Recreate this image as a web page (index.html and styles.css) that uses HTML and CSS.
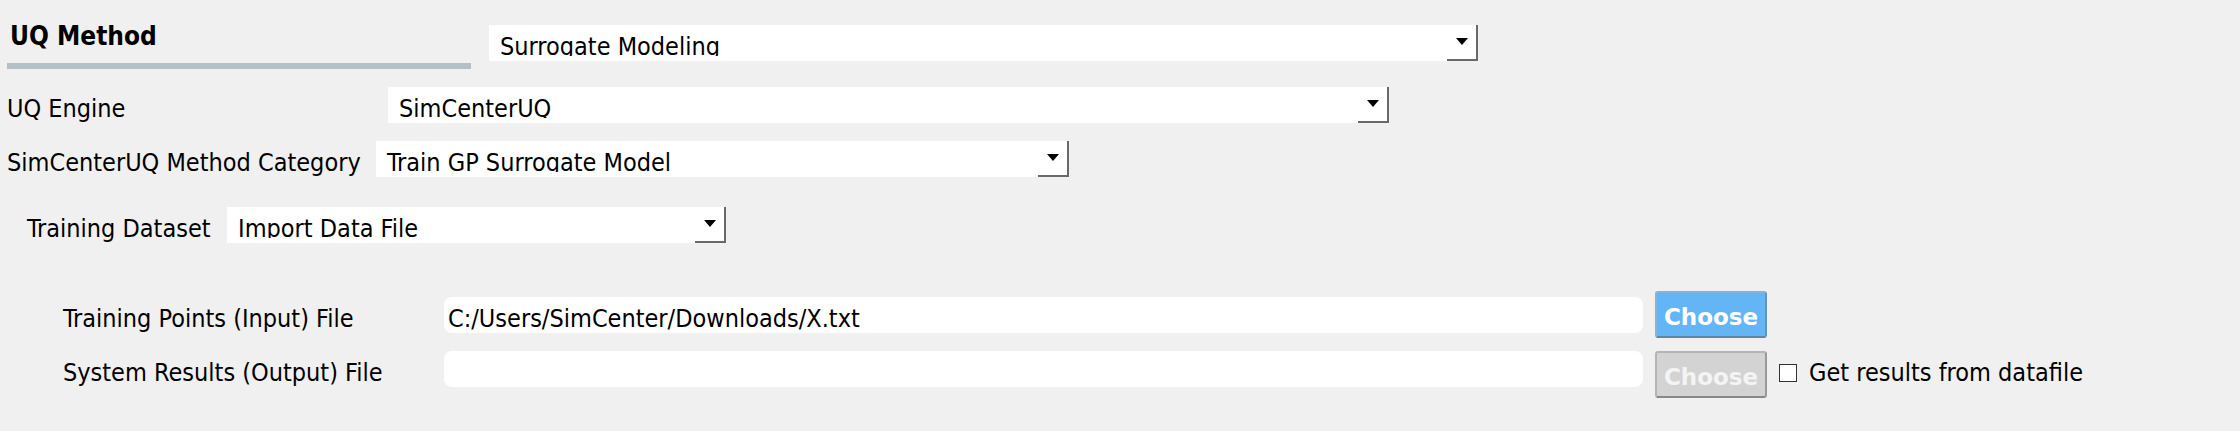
FILE: index.html
```html
<!DOCTYPE html>
<html>
<head>
<meta charset="utf-8">
<link rel="stylesheet" href="styles.css">
</head>
<body>
<div class="page">
  <div class="row row-method">
    <div class="section-title">UQ Method</div>
    <div class="combo combo-method">
      <span class="combo-text">Surrogate Modeling</span>
      <span class="combo-btn"><span class="tri"></span></span>
    </div>
  </div>
  <div class="row row-engine">
    <div class="label label-engine">UQ Engine</div>
    <div class="combo combo-engine">
      <span class="combo-text">SimCenterUQ</span>
      <span class="combo-btn"><span class="tri"></span></span>
    </div>
  </div>
  <div class="row row-category">
    <div class="label label-category">SimCenterUQ Method Category</div>
    <div class="combo combo-category">
      <span class="combo-text">Train GP Surrogate Model</span>
      <span class="combo-btn"><span class="tri"></span></span>
    </div>
  </div>
  <div class="row row-dataset">
    <div class="label label-dataset">Training Dataset</div>
    <div class="combo combo-dataset">
      <span class="combo-text">Import Data File</span>
      <span class="combo-btn"><span class="tri"></span></span>
    </div>
  </div>
  <div class="row row-file row-input">
    <div class="label label-file">Training Points (Input) File</div>
    <div class="field"><span class="field-text">C:/Users/SimCenter/Downloads/X.txt</span></div>
    <button class="btn btn-active">Choose</button>
  </div>
  <div class="row row-file row-output">
    <div class="label label-file">System Results (Output) File</div>
    <div class="field"><span class="field-text"></span></div>
    <button class="btn btn-disabled">Choose</button>
    <label class="check"><span class="box"></span><span class="check-text">Get results from datafile</span></label>
  </div>
</div>
</body>
</html>
```
FILE: styles.css
```css
html, body {
  margin: 0;
  padding: 0;
  background: #f0f0f0;
}
body {
  width: 2240px;
  height: 431px;
  overflow: hidden;
  font-family: "DejaVu Sans Condensed", "DejaVu Sans", sans-serif;
  font-stretch: condensed;
  font-size: 25px;
  color: #000;
}
.page {
  display: flex;
  flex-direction: column;
}
.row {
  display: flex;
  align-items: flex-start;
}
.row-method {
  height: 69px;
}
.section-title {
  margin-left: 7px;
  width: 464px;
  padding-left: 3px;
  box-sizing: border-box;
  height: 69px;
  padding-top: 20px;
  line-height: 32px;
  font-weight: bold;
  font-size: 26px;
  border-bottom: 6px solid #b4c0c8;
}
.combo {
  background: #fff;
  height: 36px;
  display: flex;
  box-sizing: border-box;
}
.combo-text {
  flex: 1;
  height: 31px;
  overflow: hidden;
  line-height: 43px;
  padding-left: 11px;
  white-space: nowrap;
}
.combo-btn {
  width: 31px;
  height: 36px;
  box-sizing: border-box;
  border-right: 2px solid #696969;
  border-bottom: 2px solid #696969;
  display: flex;
  align-items: center;
  justify-content: center;
}
.tri {
  width: 0;
  height: 0;
  border-left: 6px solid transparent;
  border-right: 6px solid transparent;
  border-top: 7px solid #000;
  margin-top: -1px;
}
.combo-method {
  margin-top: 25px;
  margin-left: 18px;
  width: 989px;
}
.label {
  white-space: nowrap;
  height: 36px;
  line-height: 43px;
}
.row-engine {
  margin-top: 18px;
}
.label-engine {
  margin-left: 7px;
  width: 381px;
}
.combo-engine {
  width: 1001px;
}
.row-category {
  margin-top: 18px;
}
.label-category {
  margin-left: 7px;
  width: 369px;
}
.combo-category {
  width: 693px;
}
.row-dataset {
  margin-top: 30px;
}
.label-dataset {
  margin-left: 27px;
  width: 200px;
}
.combo-dataset {
  width: 499px;
}
.label-file {
  margin-left: 63px;
  width: 381px;
}
.row-input {
  margin-top: 48px;
  height: 47px;
}
.row-input .label-file,
.row-input .field {
  margin-top: 6px;
}
.row-output {
  margin-top: 13px;
}
.field {
  width: 1199px;
  height: 36px;
  background: #fff;
  border-radius: 8px;
}
.field-text {
  display: block;
  height: 36px;
  padding-left: 4px;
  white-space: nowrap;
  line-height: 43px;
}
.btn {
  margin-left: 12px;
  width: 112px;
  height: 47px;
  box-sizing: border-box;
  border-radius: 3px;
  font-family: "DejaVu Sans", sans-serif;
  font-weight: bold;
  font-size: 23px;
  color: #fff;
  padding: 5px 0 0 0;
}
.btn-active {
  background: #64b5f6;
  border: 2px solid #7fb5de;
  border-bottom-color: #5a87a6;
  border-right-color: #6a93b3;
}
.btn-disabled {
  background: #d3d3d3;
  border: 2px solid #b4b4b4;
  border-bottom-color: #888;
  border-right-color: #999;
  color: #f4f4f4;
}
.check {
  display: flex;
  align-items: center;
  margin-left: 12px;
  margin-top: 12px;
  line-height: 20px;
}
.box {
  width: 18px;
  height: 18px;
  box-sizing: border-box;
  border: 1px solid #333;
  background: #fff;
}
.check-text {
  margin-left: 12px;
}
```
